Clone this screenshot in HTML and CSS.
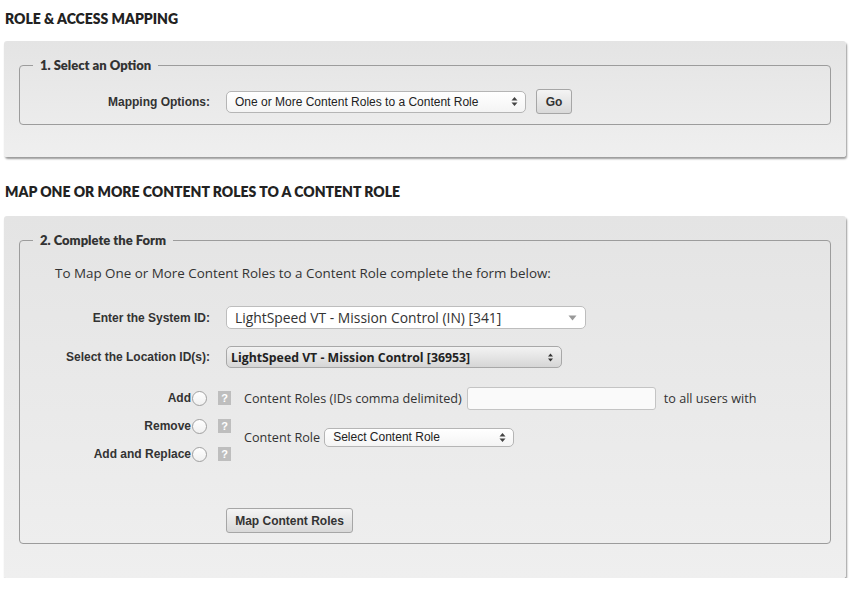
FILE: index.html
```html
<!DOCTYPE html>
<html>
<head>
<meta charset="utf-8">
<link rel="stylesheet" href="styles.css">
</head>
<body>
<h1 class="page-title">ROLE &amp; ACCESS MAPPING</h1>
<div class="panel">
  <fieldset class="group group-one">
    <legend>1. Select an Option</legend>
    <div class="row">
      <label class="row-label">Mapping Options:</label>
      <div class="row-controls">
        <div class="select select-plain select-mapping">
          <span class="select-text">One or More Content Roles to a Content Role</span>
          <svg class="updown" width="7" height="11" viewBox="0 0 7 11"><path d="M3.5 1 L6.5 4.5 L0.5 4.5 Z M3.5 10 L6.5 6.5 L0.5 6.5 Z" fill="#444"/></svg>
        </div>
        <button class="btn btn-go">Go</button>
      </div>
    </div>
  </fieldset>
</div>

<h2 class="section-title">MAP ONE OR MORE CONTENT ROLES TO A CONTENT ROLE</h2>
<div class="panel panel-form">
  <fieldset class="group group-two">
    <legend>2. Complete the Form</legend>
    <p class="intro">To Map One or More Content Roles to a Content Role complete the form below:</p>
    <div class="row row-system">
      <label class="row-label">Enter the System ID:</label>
      <div class="select select-system">
        <span class="select-text">LightSpeed VT - Mission Control (IN) [341]</span>
        <svg class="down" width="9" height="6" viewBox="0 0 9 6"><path d="M0.5 0.5 L8.5 0.5 L4.5 5.5 Z" fill="#999"/></svg>
      </div>
    </div>
    <div class="row row-location">
      <label class="row-label">Select the Location ID(s):</label>
      <div class="select select-location">
        <span class="select-text">LightSpeed VT - Mission Control [36953]</span>
        <svg class="updown" width="7" height="11" viewBox="0 0 7 11"><path d="M3.5 1.5 L6 4.5 L1 4.5 Z M3.5 9.5 L6 6.5 L1 6.5 Z" fill="#333"/></svg>
      </div>
    </div>
    <div class="action-area">
      <div class="action-list">
        <div class="action">
          <span class="action-label">Add</span>
          <span class="radio"></span>
          <span class="help">?</span>
        </div>
        <div class="action">
          <span class="action-label">Remove</span>
          <span class="radio"></span>
          <span class="help">?</span>
        </div>
        <div class="action">
          <span class="action-label">Add and Replace</span>
          <span class="radio"></span>
          <span class="help">?</span>
        </div>
      </div>
      <div class="action-fields">
        <div class="field-line">
          <span class="field-text">Content Roles (IDs comma delimited)</span>
          <input class="text-input" type="text">
          <span class="field-text field-after">to all users with</span>
        </div>
        <div class="field-line field-line-2">
          <span class="field-text">Content Role</span>
          <div class="select select-plain select-role">
            <span class="select-text">Select Content Role</span>
            <svg class="updown" width="7" height="11" viewBox="0 0 7 11"><path d="M3.5 1 L6.5 4.5 L0.5 4.5 Z M3.5 10 L6.5 6.5 L0.5 6.5 Z" fill="#444"/></svg>
          </div>
        </div>
      </div>
    </div>
    <div class="submit-row">
      <button class="btn btn-submit">Map Content Roles</button>
    </div>
  </fieldset>
</div>
</body>
</html>
```

FILE: styles.css
```css
* { box-sizing: border-box; }

body {
  margin: 0;
  background: #ffffff;
  font-family: "Liberation Sans", Arial, sans-serif;
  color: #333333;
  width: 854px;
}

.page-title,
.section-title {
  margin: 0;
  padding-left: 5px;
  font-family: Lato, "Open Sans", sans-serif;
  font-weight: 800;
  font-size: 14px;
  line-height: 20px;
  color: #222222;
}

.page-title {
  padding-top: 9px;
  height: 41px;
}

.section-title {
  padding-top: 25px;
  height: 59px;
}

.panel {
  margin-left: 4px;
  width: 842px;
  padding: 16px 15px 32px 15px;
  background: linear-gradient(#e4e4e4, #efefef);
  border-radius: 3px;
  box-shadow: 1px 2px 2px rgba(0, 0, 0, 0.4);
}

.panel-form { padding-bottom: 34px; }

.group {
  margin: 0;
  border: 1px solid #9c9c9c;
  border-radius: 4px;
  padding: 16px 13px 10px 13px;
  min-width: 0;
}

.group legend {
  padding: 0 7px;
  font-family: Lato, "Open Sans", sans-serif;
  font-weight: 800;
  font-size: 13px;
  line-height: 16px;
  color: #333333;
}

.row {
  display: flex;
  align-items: center;
}

.row-label {
  width: 177px;
  margin-right: 16px;
  text-align: right;
  font-weight: 700;
  font-size: 12px;
  color: #333333;
}

.row-controls {
  display: flex;
  align-items: center;
  gap: 10px;
}

.select {
  display: flex;
  align-items: center;
  justify-content: space-between;
  border-radius: 5px;
  white-space: nowrap;
}

.select-plain {
  height: 22px;
  padding: 0 7px 0 8px;
  background: linear-gradient(#ffffff, #f4f4f4);
  border: 1px solid #b5b5b5;
  font-size: 12px;
  color: #222222;
}

.select-mapping { width: 300px; }

.btn {
  height: 25px;
  border: 1px solid #a6a6a6;
  border-radius: 3px;
  background: linear-gradient(#f4f4f4, #d9d9d9);
  font-family: "Liberation Sans", Arial, sans-serif;
  font-weight: 700;
  font-size: 12px;
  color: #333333;
  padding: 0 9px;
}

.btn-go { width: 36px; padding: 0; }

.intro {
  margin: 0 0 0 22px;
  font-family: "Open Sans", sans-serif;
  font-size: 13.4px;
  line-height: 18px;
  color: #333333;
}

.row-system { margin-top: 24px; }

.select-system {
  width: 360px;
  height: 23px;
  padding: 0 8px 0 8px;
  background: #ffffff;
  border: 1px solid #bdbdbd;
  font-family: "Open Sans", sans-serif;
  font-size: 13.85px;
  color: #333333;
}

.row-location { margin-top: 17px; }

.select-location {
  width: 336px;
  height: 22px;
  padding: 0 7px 0 4px;
  background: linear-gradient(#f3f3f3, #d6d6d6);
  border: 1px solid #a8a8a8;
  font-family: "Open Sans", sans-serif;
  font-weight: 700;
  font-size: 12.3px;
  color: #222222;
}

.action-area {
  display: flex;
  margin-top: 16px;
}

.action-list {
  display: flex;
  flex-direction: column;
}

.action {
  display: flex;
  align-items: center;
  height: 28px;
}

.action-label {
  width: 158px;
  text-align: right;
  font-weight: 700;
  font-size: 12px;
  color: #333333;
}

.radio {
  width: 15px;
  height: 15px;
  margin-left: 1px;
  border: 1px solid #a0a0a0;
  border-radius: 50%;
  background: linear-gradient(#ffffff, #f0f0f0);
}

.help {
  width: 13px;
  height: 14px;
  margin-left: 11px;
  background: #bebebe;
  color: #ffffff;
  font-weight: 700;
  font-size: 11px;
  line-height: 14px;
  text-align: center;
}

.action-fields {
  margin-left: 13px;
  display: flex;
  flex-direction: column;
}

.field-line {
  display: flex;
  align-items: center;
  height: 28px;
}

.field-line-2 { margin-top: 11px; }

.field-text {
  font-family: "Open Sans", sans-serif;
  font-size: 12.65px;
  color: #333333;
  white-space: nowrap;
}

.text-input {
  width: 189px;
  height: 23px;
  margin-left: 5px;
  border: 1px solid #c4c4c4;
  border-radius: 3px;
  background: #fafafa;
}

.field-after { margin-left: 8px; }

.select-role {
  width: 190px;
  height: 19px;
  margin-left: 4px;
}

.submit-row {
  margin-top: 40px;
  padding-left: 193px;
}

.btn-submit { width: 127px; padding: 0; }
```
